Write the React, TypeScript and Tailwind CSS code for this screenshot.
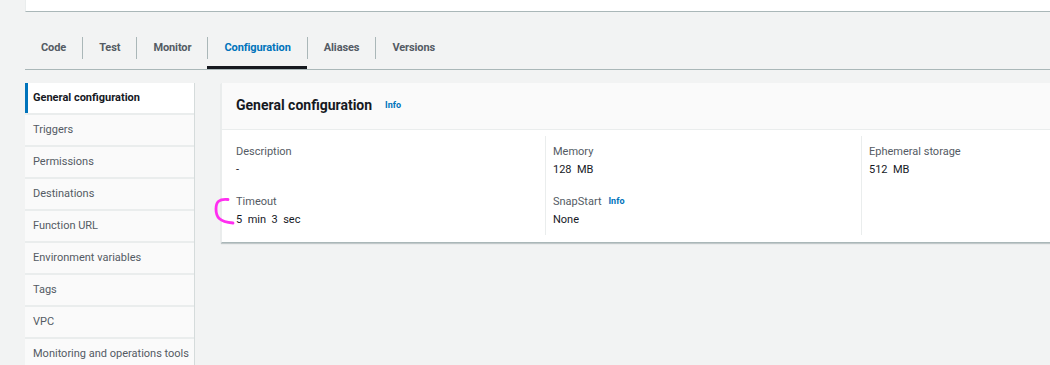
import React from 'react';

const tabs = ['Code', 'Test', 'Monitor', 'Configuration', 'Aliases', 'Versions'];

const sideItems = [
  'General configuration',
  'Triggers',
  'Permissions',
  'Destinations',
  'Function URL',
  'Environment variables',
  'Tags',
  'VPC',
  'Monitoring and operations tools',
];

function Field({ label, value, info }: { label: string; value: string; info?: boolean }) {
  return (
    <div className="flex flex-col">
      <div className="h-[18px] flex items-center text-[11px] text-[#545b64] whitespace-pre">
        {label}
        {info && <span className="ml-[7px] text-[9px] font-bold text-[#0073bb]">Info</span>}
      </div>
      <div className="h-[18px] flex items-center text-[11px] text-[#16191f] whitespace-pre">{value}</div>
    </div>
  );
}

export default function App() {
  return (
    <div
      className="relative w-[1050px] h-[365px] overflow-hidden bg-[#f2f3f3] pl-[25px]"
      style={{ fontFamily: 'Roboto, "Liberation Sans", sans-serif' }}
    >
      {/* top panel edge */}
      <div className="w-[1100px] h-[12px] bg-white border-l border-b border-l-[#eaeded] border-b-[#aab7b8]" />

      {/* tabs */}
      <div className="w-[1100px] mt-[25px] flex border-b border-[#aab7b8]">
        {tabs.map((t, i) => {
          const active = t === 'Configuration';
          return (
            <div key={t} className="flex flex-col">
              <div
                className={`h-[22px] px-4 flex items-center text-[11px] font-bold tracking-[-0.1px] ${
                  i > 0 ? 'border-l border-[#aab7b8]' : ''
                } ${active ? 'text-[#0073bb]' : 'text-[#545b64]'}`}
              >
                {t}
              </div>
              <div className={`mt-[7px] h-[3px] ${active ? 'bg-[#16191f]' : ''}`} />
            </div>
          );
        })}
      </div>

      <div className="flex mt-[13px] gap-[26px]">
        {/* side nav */}
        <div className="w-[170px] flex-none flex flex-col gap-[2px] bg-[#eaeded] border-r border-[#d5dbdb]">
          {sideItems.map((s, i) =>
            i === 0 ? (
              <div
                key={s}
                className="h-[30px] flex items-center bg-white border-l-[3px] border-[#0073bb] pl-[5px] text-[11px] font-bold text-[#16191f] whitespace-nowrap"
              >
                {s}
              </div>
            ) : (
              <div
                key={s}
                className="h-[30px] flex items-center bg-[#fafafa] pl-2 text-[11px] text-[#545b64] whitespace-nowrap"
              >
                {s}
              </div>
            )
          )}
        </div>

        {/* card */}
        <div className="self-start w-[985px] flex-none bg-white border-l border-[#eaeded] border-b border-b-[#aab7b8] shadow-[0_1px_1px_rgba(0,28,36,0.2)]">
          <div className="h-[47px] flex items-center px-[14px] pb-[2px] bg-[#fafafa] border-b border-[#eaeded]">
            <span className="text-[14px] font-bold text-[#16191f]">General configuration</span>
            <span className="ml-[13px] text-[9px] font-bold text-[#0073bb] mt-[1px]">Info</span>
          </div>
          <div className="flex pt-[6px] pb-[7px]">
            <div className="w-[323px] flex-none flex flex-col gap-[14px] px-[14px] pt-[7px] pb-[6px]">
              <Field label="Description" value="-" />
              <Field label="Timeout" value="5  min  3  sec" />
            </div>
            <div className="w-[316px] flex-none flex flex-col gap-[14px] pl-[7px] pr-[15px] pt-[7px] pb-[6px] border-l border-[#eaeded]">
              <Field label="Memory" value="128  MB" />
              <Field label="SnapStart" value="None" info />
            </div>
            <div className="flex-1 flex flex-col gap-[14px] pl-[7px] pr-[15px] pt-[7px] pb-[6px] border-l border-[#eaeded]">
              <Field label="Ephemeral storage" value="512  MB" />
            </div>
          </div>
        </div>
      </div>

      {/* hand-drawn annotation mark */}
      <svg className="absolute left-0 top-0 pointer-events-none" width="1050" height="365">
        <path
          d="M228 199.5 C219 198.5 216 202 216 209 C216 217 219 221.5 233 223"
          fill="none"
          stroke="#ff2ef0"
          strokeWidth="2.8"
          strokeLinecap="round"
        />
      </svg>
    </div>
  );
}
